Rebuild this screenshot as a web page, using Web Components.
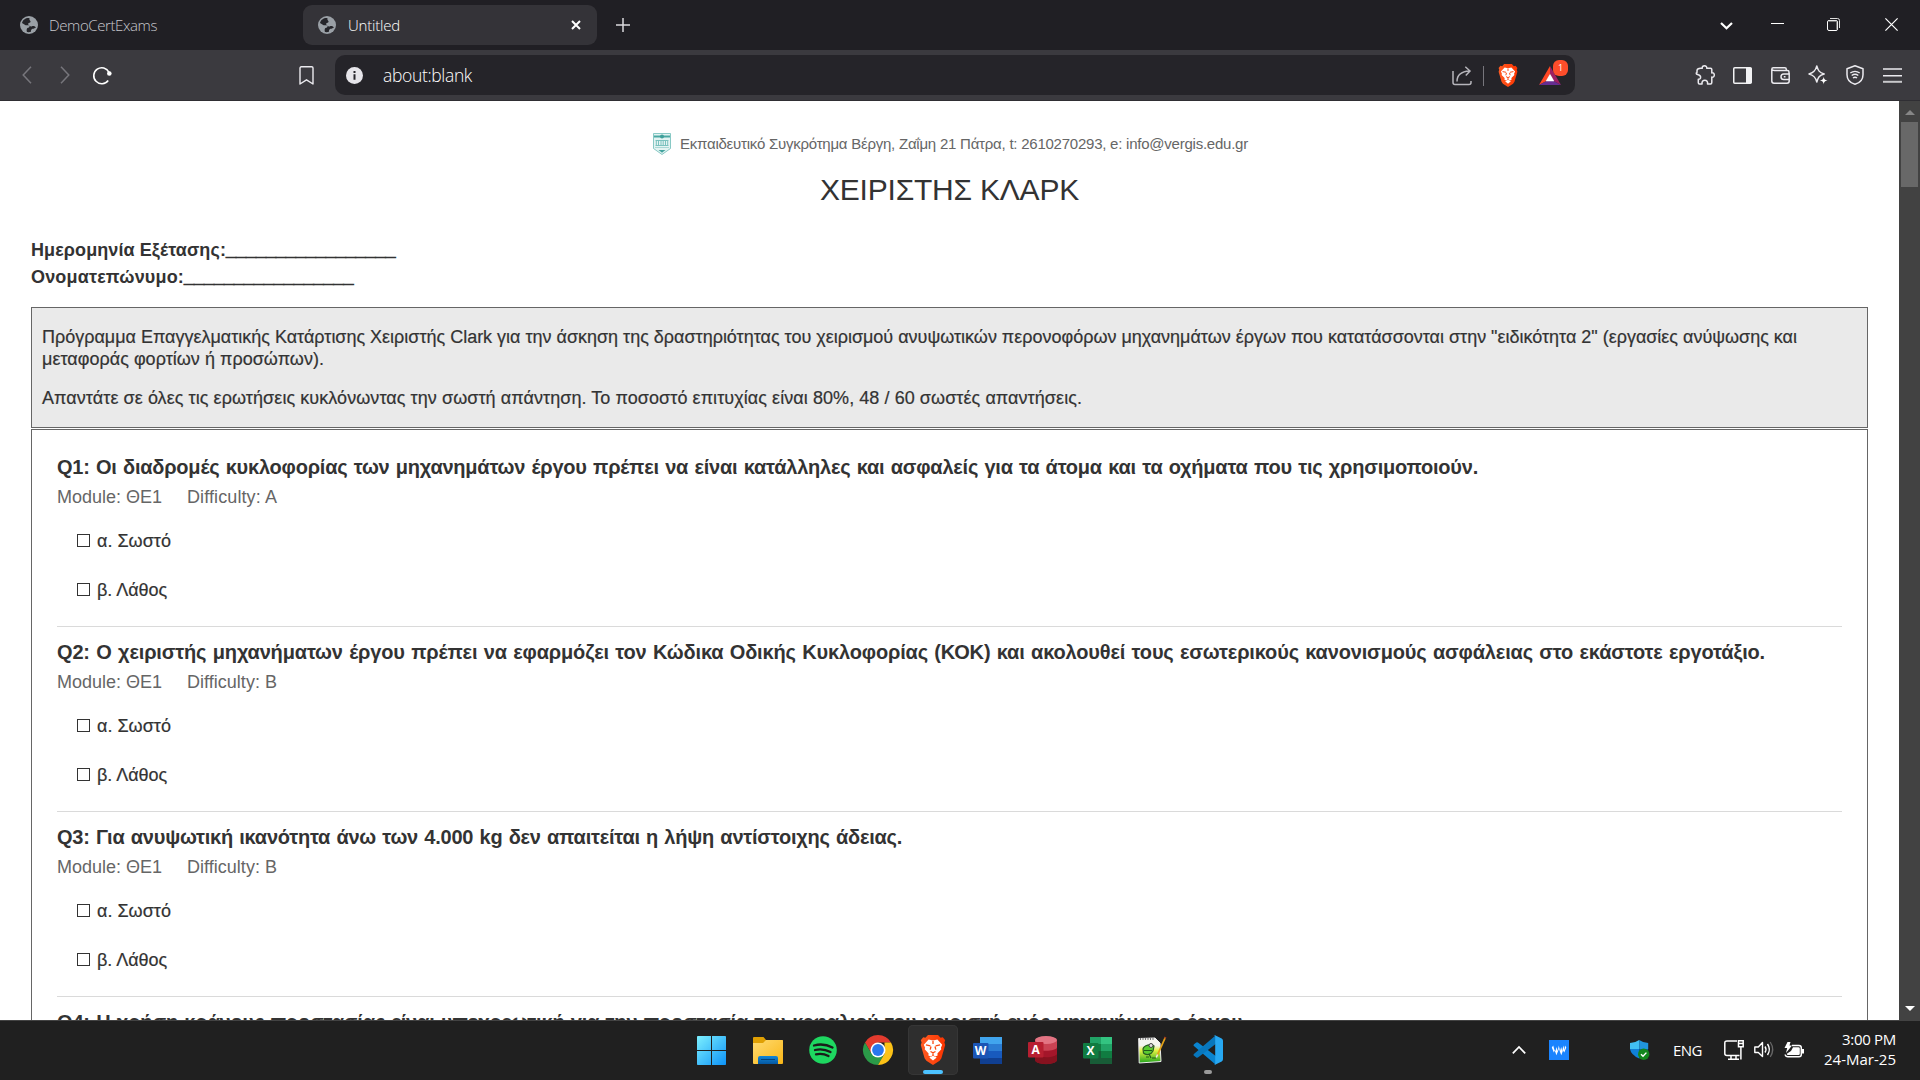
<!DOCTYPE html>
<html lang="el">
<head>
<meta charset="utf-8">
<title>Untitled</title>
<style>
html,body{margin:0;height:100%;overflow:hidden;background:#fff}
body{font-family:"Liberation Sans",Arial,sans-serif;color:#333}
</style>
</head>
<body>
<desktop-screen></desktop-screen>
<script>
const LION = `<path fill="url(#bg)" d="M8 0h10l2.6 2.8 2.2-.5 2.4 3-.8 2.3.8 2.4-3.8 13.2-1.8 2.5L13 30l-6.6-4.3-1.8-2.5L.8 10l.8-2.4-.8-2.3 2.4-3 2.2.5z"/><path fill="#fff" d="M8.600 4.500l4.400.9 4.400-.9 4.800 5.300-1.300 3 .4 1.400-3.900 4.200.2 2.100-2.300.900-2.300-1.500-2.300 1.500-2.300-.9.2-2.100-3.900-4.200.4-1.400-1.300-3z"/><path fill="#fff" d="M9.300 22.600L13 20.700l3.700 1.900-3.700 3z"/><path fill="none" stroke="#fb4a12" stroke-width="1.300" d="M13 6v3M5.900 9.900l4.500.9M20.100 9.900l-4.500.9M11 11.500l-.8 3.200M15 11.500l.8 3.200M10.500 16.500l2.500 1.300 2.500-1.300M13 17.500v3"/>`;
const letter = (fill,t) => `<rect y="6" width="15.500" height="15.500" rx="1" fill="${fill}"/><text x="7.600" y="18" text-anchor="middle" font-family="Open Sans,sans-serif" font-weight="700" font-size="12" fill="#fff">${t}</text>`;
const ICONS = {
 globe:[18,18,`<circle cx="9" cy="9" r="9" fill="#9aa0a6"/><path fill="#25252a" d="M9.500 2C6 1.500 2.700 3.600 2 7l3.600 2.200 3 .1c1 .2 1.400 1.500.4 2.200l-1.600.4c-.8.900-1 2.500-.4 4.100 1.500.300 3 .1 4-.3-.3-1.500.3-2.500 1.500-3 1.500-.1 2.500-.6 3.400-1.300-1.600-1.500-2.800-1.600-4.300-.9-1.600.4-2-.9-3.100-1.700-.9-.8-.1-1.800 1.100-2 1.500-.3 1.100-1.300.4-2.200-.6-.9-.8-1.600-.5-2.600z"/>`],
 tabclose:[10,10,`<path d="M1 1l8 8M9 1L1 9" stroke="#fff" stroke-width="2"/>`],
 plus:[14,14,`<path d="M7 0v14M0 7h14" stroke="#dadadd" stroke-width="1.500"/>`],
 caret:[13,8,`<path d="M1 1l5.500 5.300L12 1" fill="none" stroke="#fff" stroke-width="2.200"/>`],
 min:[13,13,`<path d="M0 5.500h13" stroke="#fff"/>`],
 restore:[13,13,`<rect x=".5" y="2.500" width="10" height="10" rx="1.500" fill="none" stroke="#fff"/><path d="M3 .5h7.500a2 2 0 0 1 2 2V10" fill="none" stroke="#ddd"/><path d="M2 3.300h7.700V11" fill="none" stroke="#888"/>`],
 winclose:[13,13,`<path d="M.4.4l12.200 12.200M12.600.4L.4 12.600" stroke="#fff" stroke-width="1.200"/>`],
 back:[10,18,`<path d="M9 .7L1.200 9 9 17.300" fill="none" stroke="#77767c" stroke-width="1.500"/>`],
 fwd:[10,18,`<path d="M1 .7L8.800 9 1 17.300" fill="none" stroke="#77767c" stroke-width="1.500"/>`],
 reload:[19,19,`<path d="M15.200 14.500A8 8 0 1 1 16 6.300" fill="none" stroke="#fff" stroke-width="1.600"/><circle cx="16.300" cy="7.500" r="2.300" fill="#fff"/>`],
 bookmark:[15,19,`<path d="M2.300.8h10.400q1.300 0 1.300 1.300V18l-6.500-4.200L1 18V2.100Q1 .8 2.300.8z" fill="none" stroke="#ebeaef" stroke-width="1.400" stroke-linejoin="round"/>`],
 info:[17,17,`<circle cx="8.500" cy="8.500" r="8.500" fill="#e6e5ea"/><path d="M7.500 4h2v2h-2zM7.500 7.300h2v5.500h-2z" fill="#26252a"/>`],
 share:[20,20,`<path d="M1 5v11.500q0 2 2 2h14q2 0 2-2V15" fill="none" stroke="#b6b5bb" stroke-width="1.500"/><path d="M5 15.500C5 9.500 8.500 5.500 17.500 5M13.300.8L18 5l-4.200 4.500" fill="none" stroke="#b6b5bb" stroke-width="1.500"/>`],
 brave:[26,30,`<defs><linearGradient id="bg"><stop stop-color="#ff5b22"/><stop offset="1" stop-color="#fb3400"/></linearGradient></defs>${LION}`],
 bat:[22,19,`<path d="M11 0L0 19l7.500-4L11 8z" fill="#ff4724"/><path d="M11 0l11 19-7.500-4L11 8z" fill="#9e1f63"/><path d="M0 19h22l-7.500-4h-7z" fill="#662d91"/><path d="M11 7.800l4.300 7.400H6.700z" fill="#fff"/>`],
 puzzle:[20,20,`<path d="M5.500 3.300h1.800C6.900 1.500 8 .8 9.500.8s2.600.900 2.200 2.500h3.800q1.300 0 1.300 1.300v3.300c1.600-.3 2.500.7 2.500 2.100s-.9 2.400-2.500 2.100v5.400q0 1.500-1.300 1.500h-3c.6-2.400-.9-3.700-2.700-3.700s-3.300 1.300-2.700 3.700H4.500Q3.300 19 3.300 17.700v-3.400c1.600.1 2.300-.7 2.300-2s-.7-2.100-2.300-2.500L1.500 9Q.8 8 2 7.300V5.500q.3-2.200 3.500-2.200z" fill="none" stroke="#ebeaef" stroke-width="1.500" stroke-linejoin="round"/>`],
 side:[19,17,`<rect x=".75" y=".75" width="17.500" height="15.500" rx="1" fill="none" stroke="#f2f2f4" stroke-width="1.500"/><path d="M13 1h5.500v15H13z" fill="#f2f2f4"/>`],
 wallet:[19,17,`<path d="M18 7V5q0-1.500-1.500-1.500h-13Q.8 3.500.8 2V14q0 2.200 2.200 2.200h13q2.200 0 2.200-2.200v-1M.8 2.300Q.8.800 2.300.8h11.500q1.500 0 1.500 1.500v1" fill="none" stroke="#ebeaef" stroke-width="1.500"/><path d="M18.200 7h-5.500q-2.700 0-2.700 2.800t2.700 2.800h5.500zM14.500 9.800h-1.700" fill="none" stroke="#ebeaef" stroke-width="1.500"/>`],
 spark:[20,20,`<path d="M8.800 1c1.200 4.500 2.500 6.500 7.400 8-4.900 1.300-6.200 3.500-7.400 8-1.200-4.500-2.800-6.700-7.800-8 5-1.500 6.600-3.500 7.800-8z" fill="none" stroke="#ebeaef" stroke-width="1.500" stroke-linejoin="round"/><path d="M15.700 11.500c.4 2.800 1 3.500 3.800 4-2.800.5-3.400 1.200-3.800 4-.4-2.800-1-3.500-3.800-4 2.800-.5 3.400-1.200 3.800-4z" fill="#fff"/>`],
 vpn:[18,20,`<path d="M9 .8L1 3.700v6C1 14.600 4.500 18 9 19.300c4.500-1.300 8-4.700 8-9.600v-6z" fill="none" stroke="#ebeaef" stroke-width="1.500" stroke-linejoin="round"/><path d="M4.300 8Q9 4.700 13.700 8M5.700 10.500Q9 8 12.300 10.500M7 13q2-1.500 4 0" fill="none" stroke="#ebeaef" stroke-width="1.400"/>`],
 menu:[19,15,`<path d="M0 1h19M0 7.700h19" stroke="#ebeaef" stroke-width="1.500"/><path d="M0 13.800h19" stroke="#c8c8cb" stroke-width="2"/>`],
 crest:[18,22,`<path d="M.5.5h17v15L9 21.500.5 15.500z" fill="#e3f3f2" stroke="#6dbcb8" stroke-width=".8"/><path d="M1 2.500h16v2H1z" fill="#4aa8a3"/><circle cx="9" cy="3.500" r="2" fill="#3f9f9a"/><path d="M2.500 7.500h13M2.500 12.500h13M3.300 8v4M5.500 8v4M8 8v4M10.200 8v4M12.500 8v4M14.700 8v4" stroke="#5fb4b0" stroke-width=".8"/><path d="M2 14.500h14" stroke="#a9d8d5"/><path d="M5.500 17h7L9 19.800z" fill="#43a39e"/>`],
 win:[29,29,`<defs><linearGradient id="w" x2="1" y2="1"><stop stop-color="#7df0fe"/><stop offset="1" stop-color="#0d93f8"/></linearGradient></defs><mask id="m"><path fill="#fff" d="M0 0h29v29H0z"/><path fill="#000" d="M14 0h1v29h-1zM0 14h29v1H0z"/></mask><rect width="29" height="29" rx=".8" fill="url(#w)" mask="url(#m)"/>`],
 folder:[30,27,`<defs><linearGradient id="f" x2="1" y2="1"><stop stop-color="#ffdb71"/><stop offset="1" stop-color="#f9b617"/></linearGradient><linearGradient id="fb" y2="1" x2="0"><stop stop-color="#1186d8"/><stop offset="1" stop-color="#0558a1"/></linearGradient></defs><path d="M0 1q0-1 1-1h9.500L13 3h16q1 0 1 1v8H0z" fill="#e0a003"/><path d="M0 6h10l3-3h16q1 0 1 1v22q0 1-1 1H1q-1 0-1-1z" fill="url(#f)"/><path d="M5 27v-6q0-2 2-2h16q2 0 2 2v6z" fill="url(#fb)"/><path d="M8 22.500h14" stroke="#04437b"/>`],
 spotify:[28,28,`<circle cx="14" cy="14" r="13.800" fill="#1ed760"/><path d="M5 9.500q9.500-2.700 18.500 2M6 14q8-2 15.500 2M7 18.300q6.500-1.500 12.500 1.700" fill="none" stroke="#1a1d1a" stroke-linecap="round" stroke-width="2.300"/>`],
 chrome:[30,30,`<path d="M2 7.500A15 15 0 0 1 28 7.500H15L8.500 11.250 8.500 18.750z" fill="#e33b2e"/><path d="M2 7.500A15 15 0 0 0 15 30l6.500-11.250L15 22.500l-6.500-3.750z" fill="#2b9a48"/><path d="M28 7.500A15 15 0 0 1 15 30l6.500-11.250V7.500z" fill="#fcc217"/><circle cx="15" cy="15" r="7.500" fill="#fff"/><circle cx="15" cy="15" r="5.900" fill="#2a77ee"/>`],
 word:[29,27,`<path fill="#41a5ee" d="M7 0h22v7H7z"/><path fill="#2b7cd3" d="M7 7h22v7H7z"/><path fill="#185abd" d="M7 14h22v7H7z"/><path fill="#103f91" d="M7 21h22v6H7z"/>`+letter('#1b55b5','W')],
 excel:[29,27,`<path fill="#21a366" d="M7 0h11v7H7z"/><path fill="#33c481" d="M18 0h11v7H18z"/><path fill="#107c41" d="M7 7h11v7H7z"/><path fill="#21a366" d="M18 7h11v7H18z"/><path fill="#185c37" d="M7 14h11v7H7z"/><path fill="#107c41" d="M18 14h11v7H18z"/><path fill="#185c37" d="M7 21h22v6H7z"/>`+letter('#107c41','X')],
 access:[29,28,`<path d="M7 3.500v20c0 6 22 6 22 0v-20z" fill="#a4162a"/><path d="M7 4v7c0 5 22 5 22 0V4z" fill="#ca4253"/><path d="M7 18c5 4.500 20 4 22 0v6c0 5.500-22 5.500-22 0z" fill="#86121f"/><ellipse cx="18" cy="4" rx="11" ry="4" fill="#e37483"/>`+letter('#b71f31','A')],
 npp:[28,28,`<defs><linearGradient id="n" x2="0" y2="1"><stop offset=".3" stop-color="#f5f5f0"/><stop offset=".5" stop-color="#e3f243"/><stop offset="1" stop-color="#1fa51b"/></linearGradient></defs><path d="M.7 2.500L17 2l5 5 1 18.500L1.200 27z" fill="url(#n)" stroke="#ededed"/><path d="M2 3h14" stroke="#777" stroke-dasharray="1 1.500" stroke-width="2"/><path d="M5 13c1-4 8-5.500 11-3l-1 5c-2 4-7 4.500-9.500 2z" fill="#5acb30" stroke="#285c22" stroke-width="1.200"/><circle cx="13" cy="9.500" r="2" fill="#ddd" stroke="#444"/><path d="M6 14.500h8M11 18l2 4M8 21h3M14 22h4" stroke="#215a19" stroke-width="1.200"/><path d="M27.300 1.500L19 20" stroke="#e3a217" stroke-width="1.800"/><path d="M19.500 18.500L18.300 21.500" stroke="#eee" stroke-width="1.500"/><path d="M26.800 2.500l.7-1.500" stroke="#9d3a1c" stroke-width="2"/>`],
 vscode:[30,30,`<path d="M1 9.300l2.300-1.800q1-.6 2 .2L24 22l-1.500 7.500L.9 11.100q-1-.9.100-1.800z" fill="#0a84d0"/><path d="M1 20.700l2.300 1.800q1 .6 2-.2L24 8 22.500.5.9 18.900q-1 .9.100 1.800z" fill="#0877bd"/><path d="M22 .3l6.700 3.200Q30 4.200 30 5.700v18.600q0 1.500-1.300 2.200L22 29.700q-1 .3-1.800-.4 1.800 1 2-1V1.700q-.2-2-2-1Q21 0 22 .3z" fill="#27a8f2"/>`],
 up:[14,8,`<path d="M.8 7.300L7 1l6.200 6.300" fill="none" stroke="#fff" stroke-width="1.700"/>`],
 wsq:[20,20,`<path fill="#1a84ff" d="M0 0h20v20H0z"/><path fill="#fff" d="M2.800 7.500L4.200 5.500 5.500 10 6.500 11 7.600 7 8.700 11 9.800 5.500 11 11 12.200 7 13.300 11 14.300 5.500 15.500 10 16 5.500 17.300 7.500 15.300 12.500 14 10.500 12.300 15.300 9.900 9 7.400 15.300 5.800 10.500 4.800 12.500z"/>`],
 defend:[20,20,`<path d="M9.200 0Q5 3 0 3v6h9.200z" fill="#41bff3"/><path d="M9.200 0q4.300 3 9 3v6h-9z" fill="#2196dd"/><path d="M0 9h9.200v9.500Q1 15 0 9z" fill="#1080d8"/><path d="M9.200 9h9q-.5 6-9 9.500z" fill="#0b5dad"/><circle cx="13.700" cy="14.200" r="5.700" fill="#13861c"/><path d="M11 14.300l2 2 3.400-3.700" fill="none" stroke="#fff" stroke-width="1.400"/>`],
 net:[20,20,`<path d="M13 1H3Q.8 1 .8 3v10.500q0 2 2.200 2h12.500M7 16v3.200M12 16v3.200M4 19.200h11" fill="none" stroke="#fff" stroke-width="1.500"/><path d="M14.500.8h4.700v6h-4.700zM16.900 7v12.500M14.500 3.500h4.500" fill="none" stroke="#fff" stroke-width="1.500"/>`],
 vol:[20,18,`<path d="M.8 6h3.500L8.500 1.500v14L4.300 11.500H.8z" fill="none" stroke="#fff" stroke-width="1.400" stroke-linejoin="round"/><path d="M11 5.500q2 3 0 6M13.500 3q3.700 5.500 0 11" fill="none" stroke="#fff" stroke-width="1.400"/><path d="M16.200 1q5 7.500 0 15" fill="none" stroke="#666" stroke-width="1.300"/>`],
 batt:[20,17,`<path d="M8 3.500h7q2.300 0 2.300 2.300v6.700q0 2.300-2.300 2.300H4q-2.500 0-2.800-2.300" fill="none" stroke="#fff" stroke-width="1.500"/><path d="M9 5.300h5.500q1.300 0 1.300 1.300v5.200q0 1.300-1.300 1.300H4q-1.200 0-1.200-1.300L7 9zM18 7h2v4.500h-2zM3.500 0h3L5.500 3.500H8L2 11l1.200-5H.5z" fill="#fff"/>`]
};

function define(name, html, setup){
  const t = document.createElement('template');
  t.innerHTML = html;
  customElements.define(name, class extends HTMLElement{
    connectedCallback(){
      if(this.shadowRoot) return;
      this.attachShadow({mode:'open'}).append(t.content.cloneNode(true));
      if(setup) setup.call(this, this.shadowRoot);
    }
  });
}

/* inline vector icon: name, optional w/h */
define('ui-icon', `<style>:host{display:block;flex:none}svg{display:block;overflow:visible}</style><svg></svg>`, function(r){
  const [w,h,body] = ICONS[this.getAttribute('name')];
  const W = this.getAttribute('w')||w, H = this.getAttribute('h')||h;
  const s = r.querySelector('svg');
  s.setAttribute('viewBox',`0 0 ${w} ${h}`); s.setAttribute('width',W); s.setAttribute('height',H);
  s.setAttribute('preserveAspectRatio','none');
  s.innerHTML = body;
});

/* single run of text, tracked to an exact width */
define('fit-text', `<style>:host{display:inline-block;white-space:pre;flex:none}span{display:inline-block}</style><span></span>`, function(r){
  const s = r.querySelector('span'), t = this.getAttribute('text'), w = +this.getAttribute('w');
  s.textContent = t;
  if(w){ const n = s.getBoundingClientRect().width; s.style.letterSpacing = ((w-n)/t.length)+'px'; this.style.width = w+'px'; }
});

define('browser-tab', `<style>
:host{display:flex;align-items:center;box-sizing:border-box;height:40px;width:283px;margin-top:5px;border-radius:9px;font:300 15px "Open Sans",sans-serif;color:#c9c8ce}
:host([active]){background:#343338;width:294px;padding-left:15px;color:#fff}
fit-text{margin:-1px 0 0 11px}
:host([active]) fit-text{margin-left:12px}
ui-icon[name=tabclose]{margin-left:auto;margin-right:16px;display:none}
:host([active]) ui-icon[name=tabclose]{display:block}
</style><ui-icon name="globe"></ui-icon><fit-text></fit-text><ui-icon name="tabclose"></ui-icon>`, function(r){
  const f = document.createElement('fit-text');
  f.setAttribute('text', this.getAttribute('label')); f.setAttribute('w', this.getAttribute('w'));
  r.querySelector('fit-text').replaceWith(f);
});

define('tab-strip', `<style>
:host{display:flex;height:50px;background:#201f24;padding-left:20px;box-sizing:border-box;align-items:flex-start}
.plus{margin:18px 0 0 19px}
.ctl{margin-left:auto;display:flex;padding:18px 22px 0 0}
.ctl ui-icon:first-child{margin-top:4px}.ctl ui-icon:nth-child(2){margin-left:38px}.ctl ui-icon:nth-child(3){margin-left:43px}.ctl ui-icon:nth-child(4){margin-left:45px}
</style><browser-tab label="DemoCertExams" w="108"></browser-tab><browser-tab active label="Untitled" w="52"></browser-tab>
<ui-icon class="plus" name="plus"></ui-icon>
<div class="ctl"><ui-icon name="caret"></ui-icon><ui-icon name="min"></ui-icon><ui-icon name="restore"></ui-icon><ui-icon name="winclose"></ui-icon></div>`);

define('address-bar', `<style>
:host{display:flex;align-items:center;width:1240px;height:40px;border-radius:10px;background:#252429;box-sizing:border-box;padding:1px 7px 0 11px;font:300 17.5px "Open Sans",sans-serif;color:#fff}
fit-text{margin:-2px 0 0 20px}
.sh{margin-left:auto}.div{width:1px;height:20px;background:#77767c;margin:0 14px 0 11px}
.bat{position:relative;margin-left:21px;margin-right:7px}
.badge{position:absolute;left:14px;top:-6px;width:15px;height:16px;border-radius:6px;background:#fe4d2b;color:#fff;font-weight:400;font-size:9px;line-height:15px;text-align:center}
</style><ui-icon name="info"></ui-icon><fit-text text="about:blank" w="89"></fit-text>
<ui-icon class="sh" name="share"></ui-icon><div class="div"></div><ui-icon name="brave" w="20" h="23"></ui-icon>
<div class="bat"><ui-icon name="bat"></ui-icon><div class="badge">1</div></div>`);

define('nav-bar', `<style>
:host{display:flex;align-items:center;height:51px;box-sizing:border-box;background:#3b3a3f;border-bottom:1px solid #2f2e33;padding:0 18px 0 22px}
.f{margin-left:28px}.r{margin-left:23px}.b{margin:1px 0 0 187px}address-bar{margin-left:21px}
.x{display:flex;align-items:center;margin-left:auto}.x>*+*{margin-left:18px}
.x>:nth-child(3),.x>:nth-child(6){margin-left:19px}
</style><ui-icon name="back"></ui-icon><ui-icon class="f" name="fwd"></ui-icon><ui-icon class="r" name="reload"></ui-icon><ui-icon class="b" name="bookmark"></ui-icon>
<address-bar></address-bar>
<div class="x"><ui-icon name="puzzle"></ui-icon><ui-icon name="side"></ui-icon><ui-icon name="wallet"></ui-icon><ui-icon name="spark"></ui-icon><ui-icon name="vpn"></ui-icon><ui-icon name="menu"></ui-icon></div>`);

define('exam-header', `<style>
:host{display:block}
.o{display:flex;align-items:center;justify-content:center;height:22px;padding:32px 0 0 2px;font-size:15px;line-height:22px;color:#666;gap:9px}
.t{text-align:center;font-size:30px;line-height:36px;margin-top:17px}
.m{font-weight:700;font-size:18px;line-height:27px;margin-top:29px;height:53px;display:flex;flex-direction:column;align-items:flex-start}
.m div{display:flex}
.line{-webkit-text-stroke:.9px #333}
</style><div class="o"><ui-icon name="crest"></ui-icon><fit-text w="568" text="Εκπαιδευτικό Συγκρότημα Βέργη, Ζαΐμη 21 Πάτρα, t: 2610270293, e: info@vergis.edu.gr"></fit-text></div>
<div class="t"><fit-text w="259" text="ΧΕΙΡΙΣΤΗΣ ΚΛΑΡΚ"></fit-text></div>
<div class="m"><div><fit-text w="195" text="Ημερομηνία Εξέτασης:"></fit-text><fit-text class="line" w="169.500" text="_________________"></fit-text></div>
<div><fit-text w="153" text="Ονοματεπώνυμο:"></fit-text><fit-text class="line" w="169.500" text="_________________"></fit-text></div></div>`);

define('exam-intro', `<style>
:host{display:block;box-sizing:border-box;height:121px;margin-top:17px;border:1px solid #666;background:#eaeaea;padding:18px 10px;font-size:18px;line-height:22px}
p{margin:0 0 17px;display:flex;flex-direction:column;align-items:flex-start}
fit-text{-webkit-text-stroke:.2px #333}
</style><p><fit-text w="1755" text='Πρόγραμμα Επαγγελματικής Κατάρτισης Χειριστής Clark για την άσκηση της δραστηριότητας του χειρισμού ανυψωτικών περονοφόρων μηχανημάτων έργων που κατατάσσονται στην "ειδικότητα 2" (εργασίες ανύψωσης και'></fit-text><fit-text w="282" text="μεταφοράς φορτίων ή προσώπων)."></fit-text></p>
<p><fit-text w="1040" text="Απαντάτε σε όλες τις ερωτήσεις κυκλόνωντας την σωστή απάντηση. Το ποσοστό επιτυχίας είναι 80%, 48 / 60 σωστές απαντήσεις."></fit-text></p>`);

define('exam-option', `<style>:host{display:flex;font-size:18px;line-height:22px;height:22px;padding-left:20px;margin-bottom:27px;gap:7px;-webkit-text-stroke:.2px #333}
i{width:11px;height:11px;border:1px solid #333;margin-top:4px;flex:none}</style><i></i><slot></slot>`);

/* a question without a level shows its heading only */
define('exam-question', `<style>
:host{display:block;height:174px;border-bottom:1px solid #dadada;margin-bottom:10px}
.q{font-weight:700;font-size:20px;line-height:30px;height:30px;word-spacing:1px}
.m{display:flex;font-size:18px;line-height:24px;height:24px;color:#666;margin:3px 0 21px;gap:25px}
</style><div class="q"></div>`, function(r){
  const mk = (t,w) => { const f = document.createElement('fit-text'); f.setAttribute('text',t); f.setAttribute('w',w); return f; };
  r.querySelector('.q').append(mk(this.getAttribute('text'), this.getAttribute('w')));
  const level = this.getAttribute('level');
  if(!level) return;
  const m = document.createElement('div');
  m.className = 'm';
  r.append(m);
  m.append(mk('Module: ΘΕ1', 105), mk('Difficulty: '+level, 90));
  for(const [t,w] of [['α. Σωστό',74],['β. Λάθος',70]]){
    const o = document.createElement('exam-option');
    r.append(o);
    o.append(mk(t,w));
  }
});

define('scroll-rail', `<style>
:host{display:flex;flex-direction:column;align-items:center;width:21px;flex:none;background:#424242}
.u,.d{border:5px solid transparent;width:0;height:0}
.u{border-top:0;border-bottom-color:#868686;margin-top:9px}
.t{width:17px;height:65px;background:#686868;margin-top:7px}
.d{border-bottom:0;border-top-color:#fff;margin:auto 0 9px}
</style><div class="u"></div><div class="t"></div><div class="d"></div>`);

define('page-view', `<style>
:host{display:flex;height:919px;overflow:hidden;background:#fff}
main{width:1837px;padding:0 31px;height:919px;overflow:hidden}
.qs{border:1px solid #666;margin-top:1px;padding:22px 25px 0}
</style><main><exam-header></exam-header><exam-intro></exam-intro><div class="qs">
<exam-question level="A" w="1421" text="Q1: Οι διαδρομές κυκλοφορίας των μηχανημάτων έργου πρέπει να είναι κατάλληλες και ασφαλείς για τα άτομα και τα οχήματα που τις χρησιμοποιούν."></exam-question>
<exam-question level="B" w="1708" text="Q2: Ο χειριστής μηχανήματων έργου πρέπει να εφαρμόζει τον Κώδικα Οδικής Κυκλοφορίας (ΚΟΚ) και ακολουθεί τους εσωτερικούς κανονισμούς ασφάλειας στο εκάστοτε εργοτάξιο."></exam-question>
<exam-question level="B" w="845" text="Q3: Για ανυψωτική ικανότητα άνω των 4.000 kg δεν απαιτείται η λήψη αντίστοιχης άδειας."></exam-question>
<exam-question w="1191" text="Q4: Η χρήση κράνους προστασίας είναι υποχρεωτική για την προστασία του κεφαλιού του χειριστή ενός μηχανήματος έργου."></exam-question>
</div></main><scroll-rail></scroll-rail>`);

define('task-button', `<style>
:host{display:flex;position:relative;align-items:center;justify-content:center;width:50px;height:50px;border-radius:5px;box-sizing:border-box}
:host([active]){background:#2e2e2e;box-shadow:inset 0 0 0 1px #363636}
i{position:absolute;bottom:1px;height:4px;border-radius:2px;width:0}
:host([active]) i{width:20px;background:#4cc2ff}
:host([running]) i{width:8px;background:#9a9a9a}
</style><slot></slot><i></i>`);

define('task-bar', `<style>
:host{display:flex;position:relative;height:60px;box-sizing:border-box;border-top:1px solid #434343;background:#202020;color:#fff;font:15px "Open Sans",sans-serif;justify-content:space-between}
.apps{display:flex;gap:5px;padding:4px 0 0 686px}
.apps>:nth-child(2){margin-left:2px}
.apps>:nth-child(6){margin-left:-1px}
.apps>:nth-child(10){margin-left:1px}
.tray{display:flex;align-items:center;padding-right:24px}
.tray>*{margin-top:-1px}
.clock{display:flex;flex-direction:column;align-items:flex-end;line-height:20px;margin:-3px 0 0 20px}
</style><div class="apps">
<task-button><ui-icon name="win"></ui-icon></task-button><task-button><ui-icon name="folder"></ui-icon></task-button><task-button><ui-icon name="spotify"></ui-icon></task-button><task-button><ui-icon name="chrome"></ui-icon></task-button><task-button active><ui-icon name="brave"></ui-icon></task-button><task-button><ui-icon name="word"></ui-icon></task-button><task-button><ui-icon name="access"></ui-icon></task-button><task-button><ui-icon name="excel"></ui-icon></task-button><task-button><ui-icon name="npp"></ui-icon></task-button><task-button running><ui-icon name="vscode"></ui-icon></task-button></div>
<div class="tray"><ui-icon name="up"></ui-icon><ui-icon name="wsq" style="margin-left:23px"></ui-icon><ui-icon name="defend" style="margin-left:61px"></ui-icon><fit-text text="ENG" w="29" style="margin-left:23px;margin-top:-2px"></fit-text><ui-icon name="net" style="margin-left:22px"></ui-icon><ui-icon name="vol" style="margin-left:10px"></ui-icon><ui-icon name="batt" style="margin-left:10px"></ui-icon>
<div class="clock"><fit-text text="3:00 PM" w="54"></fit-text><fit-text text="24-Mar-25" w="72"></fit-text></div></div>`);

define('desktop-screen', `<style>:host{display:flex;flex-direction:column;width:1920px;height:1080px;overflow:hidden}:host>*{flex:none}</style>
<tab-strip></tab-strip><nav-bar></nav-bar><page-view></page-view><task-bar></task-bar>`);
</script>
</body>
</html>
